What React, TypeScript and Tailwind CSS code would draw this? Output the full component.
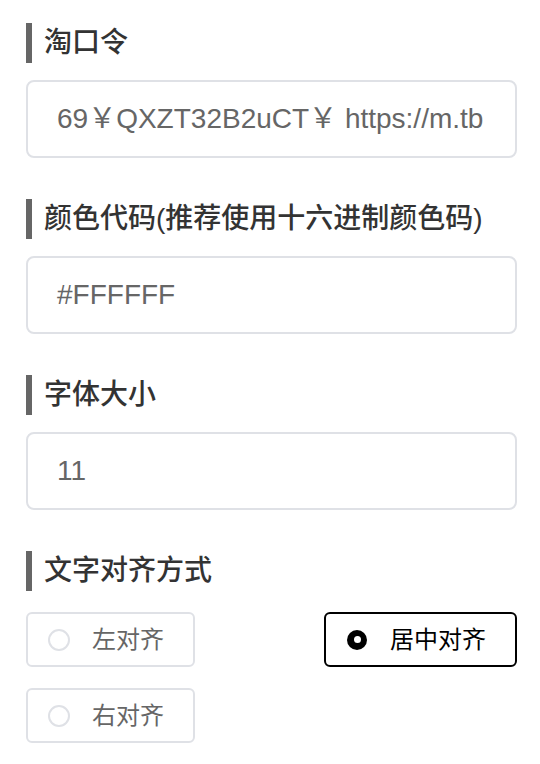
import { useState } from "react";

const cjk = "font-['Liberation_Sans','Noto_Sans_CJK_SC',sans-serif]";

type Align = "left" | "center" | "right";

function SectionTitle({ text }: { text: string }) {
  return (
    <div className="flex h-[40px] items-center">
      <div className="h-[40px] w-[6px] bg-[#666666]"></div>
      <div className="ml-[12px] text-[28px] font-medium leading-[40px] text-[#333333]">
        {text}
      </div>
    </div>
  );
}

// plain box instead of <input> so the long token clips where the reference does
function TextField({ value }: { value: string }) {
  return (
    <div className="mt-[17px] flex h-[78px] w-full items-center overflow-hidden whitespace-nowrap rounded-lg border-2 border-[#dfe1e6] bg-white pl-[29px] pr-[28px] text-[28px] text-[#666666]">
      {value}
    </div>
  );
}

function RadioBox({
  label,
  checked,
  onClick,
}: {
  label: string;
  checked: boolean;
  onClick: () => void;
}) {
  return (
    <div
      onClick={onClick}
      className={
        checked
          ? "flex h-[55px] cursor-pointer items-center rounded-md border-2 border-black pl-[20px] pr-[29px]"
          : "flex h-[55px] cursor-pointer items-center rounded-md border-2 border-[#dfe1e6] pl-[20px] pr-[29px]"
      }
    >
      <div className="flex h-[22px] w-[22px] items-center justify-center">
        {checked ? (
          <div className="flex h-[20px] w-[20px] items-center justify-center rounded-full bg-black">
            <div className="h-[7px] w-[7px] rounded-full bg-white"></div>
          </div>
        ) : (
          <div className="h-[22px] w-[22px] rounded-full border-2 border-[#dfe1e6]"></div>
        )}
      </div>
      <div
        className={
          checked
            ? "ml-[22px] text-[24px] leading-[24px] text-black"
            : "ml-[22px] text-[24px] leading-[24px] text-[#666666]"
        }
      >
        {label}
      </div>
    </div>
  );
}

export default function App() {
  const [align, setAlign] = useState<Align>("center");

  return (
    <div className={`min-h-[764px] bg-white pl-[26px] pr-[23px] pt-[23px] ${cjk}`}>
      <div className="flex flex-col">
        <SectionTitle text="淘口令" />
        <TextField value="69￥QXZT32B2uCT￥ https://m.tb" />
      </div>

      <div className="mt-[41px] flex flex-col">
        <SectionTitle text="颜色代码(推荐使用十六进制颜色码)" />
        <TextField value="#FFFFFF" />
      </div>

      <div className="mt-[41px] flex flex-col">
        <SectionTitle text="字体大小" />
        <TextField value="11" />
      </div>

      <div className="mt-[41px] flex flex-col">
        <SectionTitle text="文字对齐方式" />
        {/* wraps: 左/居中 on the first row, 右 falls to the second */}
        <div className="mt-[21px] flex flex-wrap justify-between gap-y-[21px]">
          <RadioBox label="左对齐" checked={align === "left"} onClick={() => setAlign("left")} />
          <RadioBox label="居中对齐" checked={align === "center"} onClick={() => setAlign("center")} />
          <RadioBox label="右对齐" checked={align === "right"} onClick={() => setAlign("right")} />
        </div>
      </div>
    </div>
  );
}
